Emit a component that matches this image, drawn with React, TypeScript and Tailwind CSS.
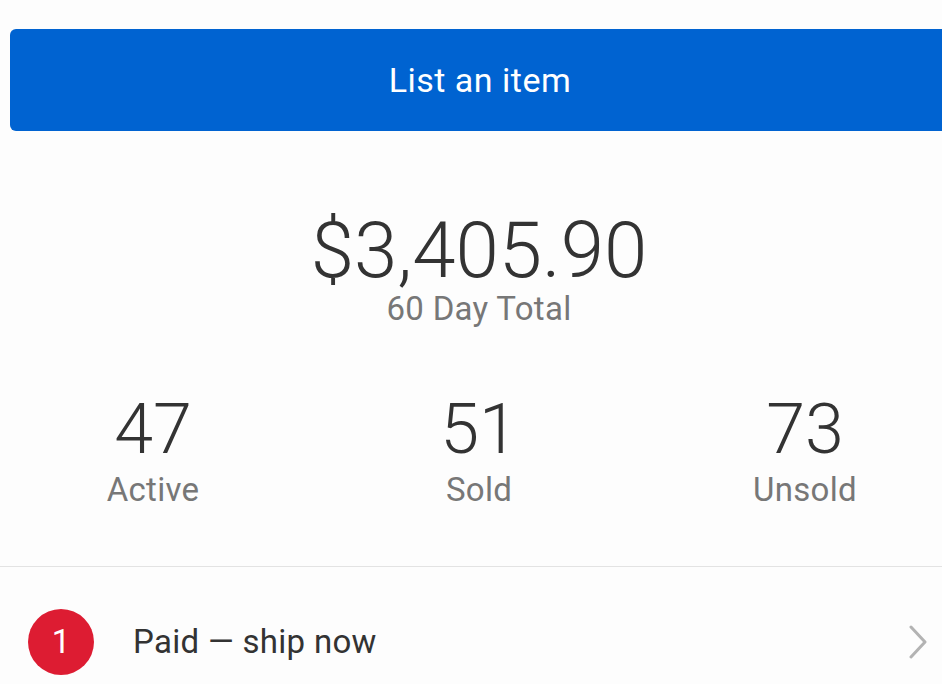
import React from "react";

const stats = [
  { value: "47", label: "Active" },
  { value: "51", label: "Sold" },
  { value: "73", label: "Unsold" },
];

export default function App() {
  return (
    <div className="w-[942px] h-[684px] overflow-hidden bg-[#fdfdfd] font-['Roboto','Inter',sans-serif]">
      <div className="pt-[29px] pl-[10px]">
        <button className="w-[940px] h-[102px] rounded-[6px] bg-[#0063d1] text-white text-[34px] tracking-[0.5px] flex items-center justify-center">
          List an item
        </button>
      </div>

      <div className="mt-[90px] pl-[16px] flex flex-col items-center">
        <div className="text-[78px] leading-[60px] font-light text-[#333333]">$3,405.90</div>
        <div className="mt-[11px] text-[33px] leading-[34px] text-[#777777] tracking-[0.3px]">60 Day Total</div>
      </div>

      <div className="mt-[67px] ml-[-10px] grid grid-cols-[326px_326px_326px]">
        {stats.map((s) => (
          <div key={s.label} className="flex flex-col items-center">
            <div className="mt-[6px] text-[70px] leading-[60px] font-light text-[#333333]">{s.value}</div>
            <div className="mt-[14px] text-[33px] leading-[34px] text-[#777777] tracking-[0.3px]">{s.label}</div>
          </div>
        ))}
      </div>

      <div className="mt-[59px] h-px bg-[#e3e3e3]" />

      <div className="flex items-center h-[150px] pl-[28px] pr-[14px]">
        <div className="w-[66px] h-[66px] rounded-full bg-[#dd1c32] text-white text-[33px] flex items-center justify-center">
          1
        </div>
        <div className="ml-[39px] text-[33px] text-[#333333] tracking-[0.3px] flex-1">Paid — ship now</div>
        <svg width="20" height="34" viewBox="0 0 20 34" fill="none">
          <path d="M3 2 L17 17 L3 32" stroke="#b3b3b3" strokeWidth="3" strokeLinecap="round" strokeLinejoin="round" />
        </svg>
      </div>
    </div>
  );
}
